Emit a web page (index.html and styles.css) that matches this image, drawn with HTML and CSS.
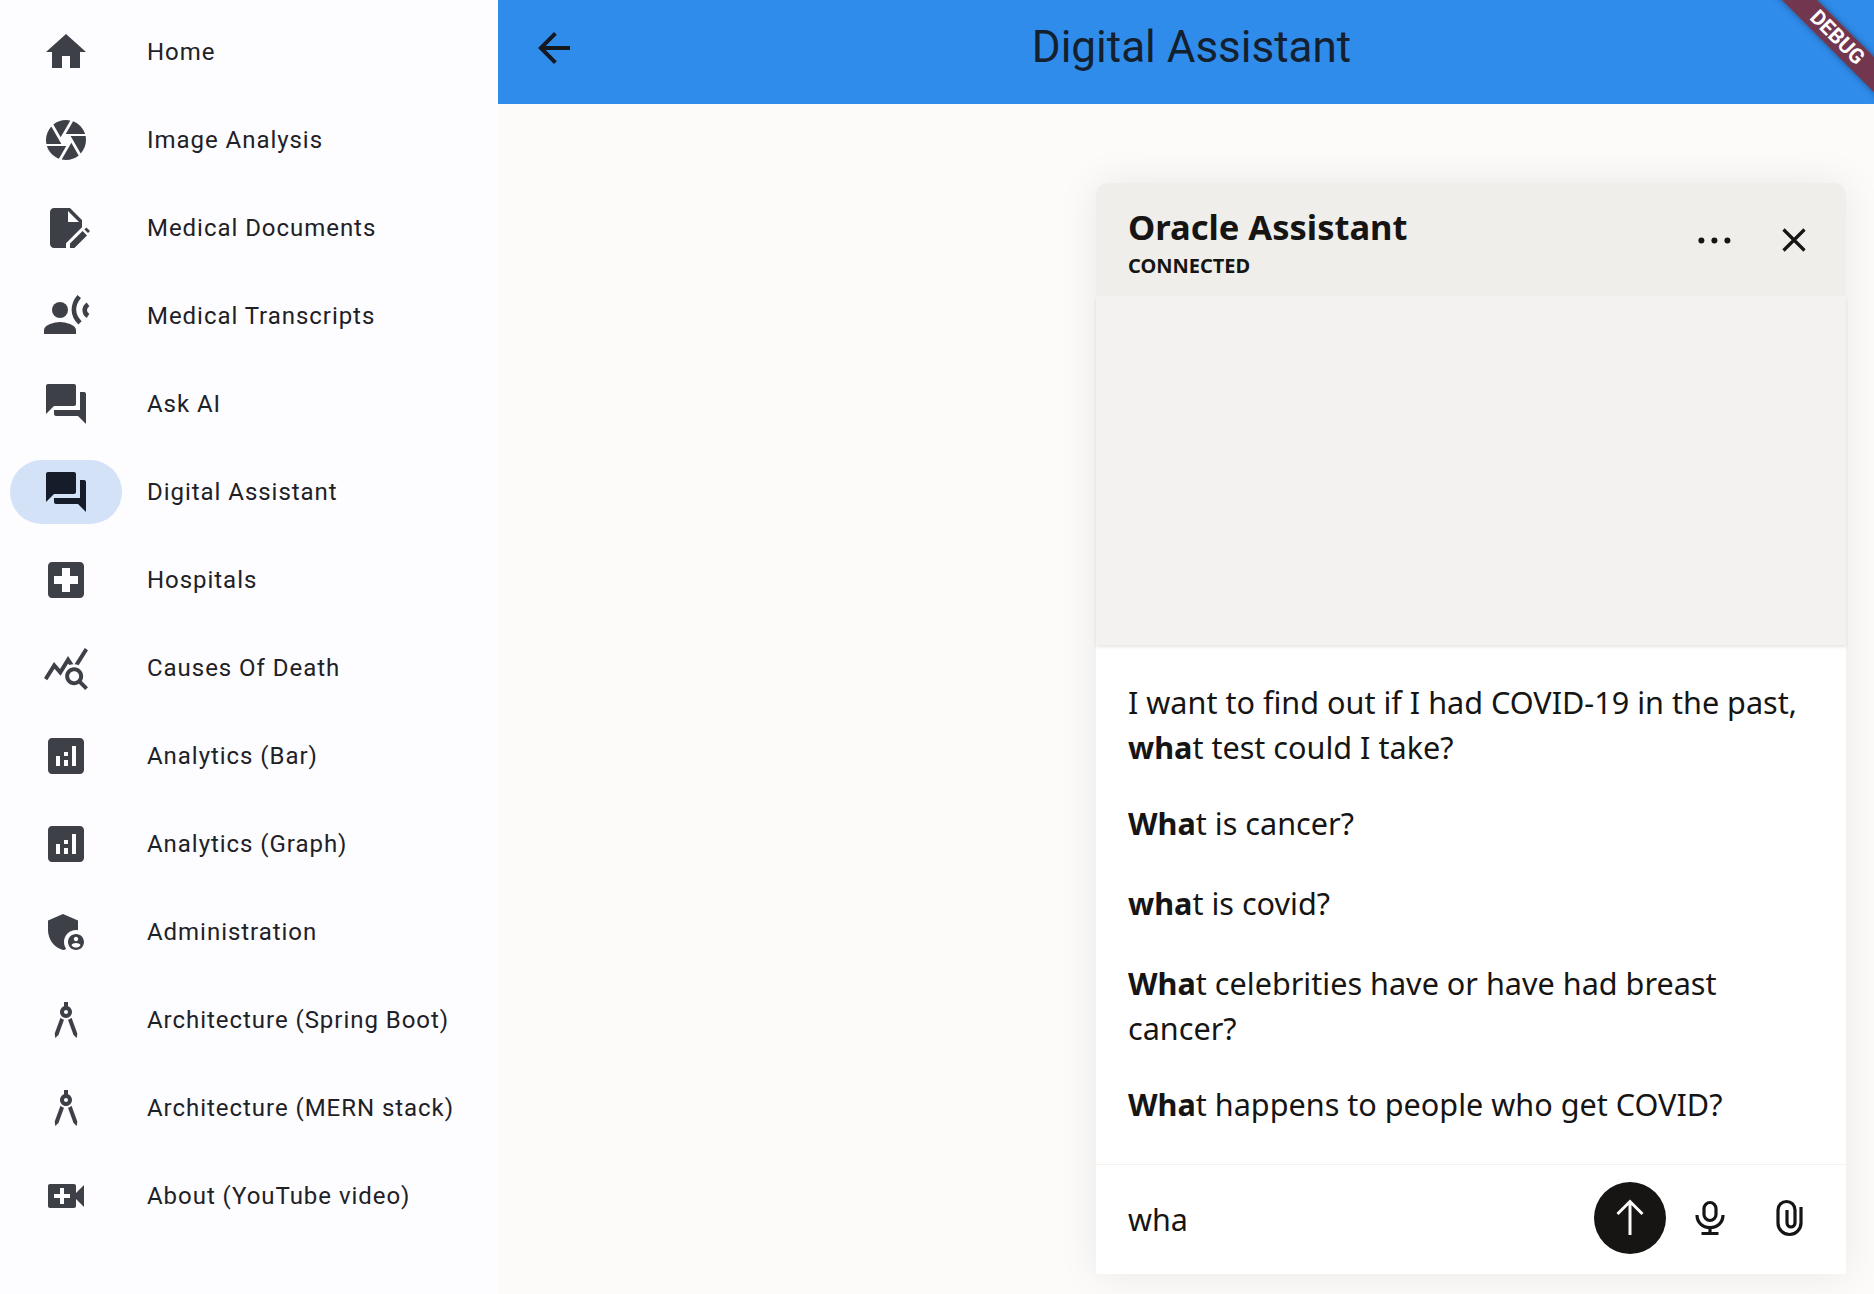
FILE: index.html
```html
<!DOCTYPE html>
<html lang="en">
<head>
<meta charset="utf-8">
<title>Digital Assistant</title>
<link rel="stylesheet" href="styles.css">
</head>
<body>
<div class="app">
  <nav class="rail">
    <a class="item"><span class="pill"><svg class="ico" viewBox="0 0 24 24"><path d="M10 20v-6h4v6h5v-8h3L12 3 2 12h3v8z"/></svg></span><span class="label">Home</span></a>
    <a class="item"><span class="pill"><svg class="ico" viewBox="0 0 24 24"><path d="M9.4 10.5l4.77-8.26C13.47 2.09 12.75 2 12 2c-2.4 0-4.6.85-6.32 2.25l3.66 6.35.06-.1zM21.54 9c-.92-2.92-3.15-5.26-6-6.34L11.88 9h9.66zm.26 1h-7.49l.29.5 4.76 8.25C21 16.97 22 14.61 22 12c0-.69-.07-1.35-.2-2zM8.54 12l-3.9-6.75C3.01 7.03 2 9.39 2 12c0 .69.07 1.35.2 2h7.49l-1.15-2zm-6.08 3c.92 2.92 3.15 5.26 6 6.34L12.12 15H2.46zm11.27 0l-3.9 6.76c.7.15 1.42.24 2.17.24 2.4 0 4.6-.85 6.32-2.25l-3.66-6.35-.93 1.6z"/></svg></span><span class="label">Image Analysis</span></a>
    <a class="item"><span class="pill"><svg class="ico" viewBox="0 0 24 24"><path fill-rule="evenodd" d="M6 2h8l6 6v3.6l-8 8V22H6c-1.1 0-2-.9-2-2V4c0-1.1.9-2 2-2zM13 3.500V9h5.500z"/><path d="M14 22v-2.200l6.300-6.300 2.200 2.200-6.300 6.300zM21.200 12.700l1-1 1.800 1.800-1 1z"/></svg></span><span class="label">Medical Documents</span></a>
    <a class="item"><span class="pill"><svg class="ico" viewBox="0 0 24 24"><circle cx="9" cy="9" r="4"/><path d="M9 15c-2.670 0-8 1.340-8 4v2h16v-2c0-2.660-5.330-4-8-4z"/><path class="arc" d="M18.600 2.200C15 6.500 15 11.500 19 15.400"/><path class="arc" d="M23 6.200C20.800 7.800 20.800 10.500 23 12"/></svg></span><span class="label">Medical Transcripts</span></a>
    <a class="item"><span class="pill"><svg class="ico" viewBox="0 0 24 24"><path d="M21 6h-2v9H6v2c0 .55.45 1 1 1h11l4 4V7c0-.55-.45-1-1-1zm-4 6V3c0-.55-.45-1-1-1H3c-.55 0-1 .45-1 1v14l4-4h10c.55 0 1-.45 1-1z"/></svg></span><span class="label">Ask AI</span></a>
    <a class="item active"><span class="pill"><svg class="ico" viewBox="0 0 24 24"><path d="M21 6h-2v9H6v2c0 .55.45 1 1 1h11l4 4V7c0-.55-.45-1-1-1zm-4 6V3c0-.55-.45-1-1-1H3c-.55 0-1 .45-1 1v14l4-4h10c.55 0 1-.45 1-1z"/></svg></span><span class="label">Digital Assistant</span></a>
    <a class="item"><span class="pill"><svg class="ico" viewBox="0 0 24 24"><path d="M19 3H5c-1.1 0-1.99.9-1.99 2L3 19c0 1.1.9 2 2 2h14c1.1 0 2-.9 2-2V5c0-1.1-.9-2-2-2zm-1 11h-4v4h-4v-4H6v-4h4V6h4v4h4v4z"/></svg></span><span class="label">Hospitals</span></a>
    <a class="item"><span class="pill"><svg class="ico" viewBox="0 0 24 24"><path d="M19.88 18.47c.44-.7.7-1.51.7-2.39 0-2.49-2.01-4.5-4.5-4.5s-4.5 2.01-4.5 4.5 2.01 4.5 4.49 4.5c.88 0 1.7-.26 2.39-.7L21.58 23 23 21.58l-3.12-3.11zm-3.8.11c-1.38 0-2.5-1.12-2.5-2.5s1.12-2.5 2.5-2.5 2.5 1.12 2.5 2.5-1.12 2.5-2.5 2.5zm-.36-8.5c-.74.02-1.45.18-2.1.45l-.55-.83-3.8 6.18-3.01-3.52-3.63 5.81L1 17l5-8 3 3.5L13 6l2.72 4.08zm2.59.5c-.64-.28-1.33-.45-2.05-.49L21.38 2 23 3.18l-4.69 7.4z"/></svg></span><span class="label">Causes Of Death</span></a>
    <a class="item"><span class="pill"><svg class="ico" viewBox="0 0 24 24"><path d="M19 3H5c-1.1 0-2 .9-2 2v14c0 1.1.9 2 2 2h14c1.1 0 2-.9 2-2V5c0-1.1-.9-2-2-2zM9 17H7v-5h2v5zm4 0h-2v-3h2v3zm0-5h-2v-2h2v2zm4 5h-2V7h2v10z"/></svg></span><span class="label">Analytics (Bar)</span></a>
    <a class="item"><span class="pill"><svg class="ico" viewBox="0 0 24 24"><path d="M19 3H5c-1.1 0-2 .9-2 2v14c0 1.1.9 2 2 2h14c1.1 0 2-.9 2-2V5c0-1.1-.9-2-2-2zM9 17H7v-5h2v5zm4 0h-2v-3h2v3zm0-5h-2v-2h2v2zm4 5h-2V7h2v10z"/></svg></span><span class="label">Analytics (Graph)</span></a>
    <a class="item"><span class="pill"><svg class="ico" viewBox="0 0 24 24"><path d="M17 11c.34 0 .67.04 1 .09V6.27L10.5 3 3 6.27v4.91c0 4.54 3.2 8.79 7.5 9.82.55-.13 1.08-.32 1.6-.55-.69-.98-1.1-2.17-1.1-3.45 0-3.31 2.69-6 6-6z"/><path d="M17 13c-2.21 0-4 1.79-4 4s1.79 4 4 4 4-1.79 4-4-1.79-4-4-4zm0 1.38c.62 0 1.12.51 1.12 1.12s-.51 1.12-1.12 1.12-1.12-.51-1.12-1.12.5-1.12 1.12-1.12zm0 5.37c-.93 0-1.74-.46-2.24-1.17.05-.72 1.51-1.08 2.24-1.08s2.19.36 2.24 1.08c-.5.71-1.31 1.17-2.24 1.17z"/></svg></span><span class="label">Administration</span></a>
    <a class="item"><span class="pill"><svg class="ico" viewBox="0 0 24 24"><path d="M6.36 18.78L6.61 21l1.62-1.54 2.77-7.6c-.68-.17-1.28-.51-1.77-.98l-2.87 7.9z"/><path d="M14.77 10.88c-.49.47-1.1.81-1.77.98l2.77 7.6L17.39 21l.26-2.22-2.88-7.9z"/><path d="M15 8c0-1.3-.84-2.4-2-2.82V3h-2v2.18C9.84 5.6 9 6.7 9 8c0 1.66 1.34 3 3 3s3-1.34 3-3zm-3 1c-.55 0-1-.45-1-1 0-.55.45-1 1-1s1 .45 1 1c0 .55-.45 1-1 1z"/></svg></span><span class="label">Architecture (Spring Boot)</span></a>
    <a class="item"><span class="pill"><svg class="ico" viewBox="0 0 24 24"><path d="M6.36 18.78L6.61 21l1.62-1.54 2.77-7.6c-.68-.17-1.28-.51-1.77-.98l-2.87 7.9z"/><path d="M14.77 10.88c-.49.47-1.1.81-1.77.98l2.77 7.6L17.39 21l.26-2.22-2.88-7.9z"/><path d="M15 8c0-1.3-.84-2.4-2-2.82V3h-2v2.18C9.84 5.6 9 6.7 9 8c0 1.66 1.34 3 3 3s3-1.34 3-3zm-3 1c-.55 0-1-.45-1-1 0-.55.45-1 1-1s1 .45 1 1c0 .55-.45 1-1 1z"/></svg></span><span class="label">Architecture (MERN stack)</span></a>
    <a class="item"><span class="pill"><svg class="ico" viewBox="0 0 24 24"><path d="M17 10.5V7c0-.55-.45-1-1-1H4c-.55 0-1 .45-1 1v10c0 .55.45 1 1 1h12c.55 0 1-.45 1-1v-3.5l4 4v-11l-4 4zM14 13h-3v3H9v-3H6v-2h3V8h2v3h3v2z"/></svg></span><span class="label">About (YouTube video)</span></a>
  </nav>
  <main class="main">
    <header class="bar">
      <svg class="ico back" viewBox="0 0 24 24"><path d="M20 11H7.83l5.59-5.59L12 4l-8 8 8 8 1.41-1.41L7.83 13H20v-2z"/></svg>
      <h1 class="title">Digital Assistant</h1>
    </header>
    <section class="stage">
      <div class="chat">
        <div class="chat-head">
          <div class="chat-id">
            <div class="chat-name">Oracle Assistant</div>
            <div class="chat-status">CONNECTED</div>
          </div>
          <div class="chat-actions">
            <svg class="act" viewBox="0 0 40 40"><circle cx="7.400" cy="20.500" r="3"/><circle cx="20.400" cy="20.500" r="3"/><circle cx="33.400" cy="20.500" r="3"/></svg>
            <svg class="act" viewBox="0 0 40 40"><path class="line" d="M9.500 9.500l21 21M30.500 9.500l-21 21"/></svg>
          </div>
        </div>
        <div class="chat-log"></div>
        <ul class="suggest">
          <li class="wrap">I want to find out if I had COVID-19 in the past, <b>wha</b>t test could I take?</li>
          <li><b>Wha</b>t is cancer?</li>
          <li><b>wha</b>t is covid?</li>
          <li class="wrap"><b>Wha</b>t celebrities have or have had breast cancer?</li>
          <li><b>Wha</b>t happens to people who get COVID?</li>
        </ul>
        <div class="composer">
          <div class="input">wha</div>
          <button class="send"><svg viewBox="0 0 72 72"><path class="line-w" d="M36 53V20M23.500 32L36 19.500 48.500 32"/></svg></button>
          <svg class="tool mic" viewBox="0 0 40 40"><path class="line" d="M20 4.500a6 6 0 0 1 6 6v6a6 6 0 0 1-12 0v-6a6 6 0 0 1 6-6zM7 17c0 7.500 5.500 12.500 13 12.500S33 24.500 33 17M20 29.500v6.500M11.500 35.500h17"/></svg>
          <svg class="tool clip" viewBox="0 0 40 40"><path class="line" d="M31 9v16a11.500 11.500 0 0 1-23 0V12a8.500 8.500 0 0 1 17 0v13a4 4 0 0 1-8 0V12"/></svg>
        </div>
      </div>
    </section>
  </main>
  <div class="ribbon">DEBUG</div>
</div>
</body>
</html>
```
FILE: styles.css
```css
* { box-sizing: border-box; }
html, body { margin: 0; height: 100%; }
body { font-family: Roboto, "Liberation Sans", sans-serif; background: #fcfbf9; overflow: hidden; }
.app { display: flex; width: 1874px; height: 1294px; position: relative; overflow: hidden; }

.rail { width: 498px; flex: none; background: #fdfcff; padding-top: 8px; display: flex; flex-direction: column; }
.item { height: 88px; display: flex; align-items: center; padding-left: 10px; gap: 25px; flex: none; }
.pill { width: 112px; height: 64px; border-radius: 32px; display: flex; align-items: center; justify-content: center; flex: none; }
.ico { width: 48px; height: 48px; fill: #3e4048; flex: none; }
.arc { fill: none; stroke: #3e4048; stroke-width: 2.3; }
.label { font-size: 24px; letter-spacing: .96px; color: #1e2126; white-space: nowrap; }
.active .pill { background: #d3e2f7; }
.active .ico { fill: #161c2a; }

.main { flex: 1; display: flex; flex-direction: column; min-width: 0; }
.bar { height: 104px; flex: none; background: #2f8ceb; display: flex; align-items: center; padding-left: 32px; padding-right: 69px; }
.back { fill: #14181f; margin-bottom: 8px; }
.title { flex: 1; margin: 0 0 10px; text-align: center; font-weight: 400; font-size: 44px; color: #14202e; }

.stage { flex: 1; display: flex; justify-content: flex-end; padding: 79px 28px 20px 0; }
.chat { width: 750px; height: 1091px; border-radius: 12px 12px 0 0; display: flex; flex-direction: column; background: #fff; box-shadow: 0 0 40px rgba(22, 21, 19, .08); color: #161513; font-family: "Noto Sans", "Open Sans", sans-serif; }
.chat-head { height: 113px; flex: none; background: #efeeea; border-radius: 12px 12px 0 0; display: flex; justify-content: space-between; padding: 20px 27px 0 32px; }
.chat-name { font-size: 34.500px; font-weight: 700; line-height: 48px; }
.chat-status { font-size: 20px; font-weight: 700; line-height: 30px; }
.chat-actions { display: flex; gap: 40px; padding-top: 17px; height: 76px; margin-right: 5px; }
.act { width: 40px; height: 40px; fill: #161513; }
.line { fill: none; stroke: #161513; stroke-width: 3.2; }
.chat-log { height: 349px; flex: none; background: #f3f2f0; box-shadow: 0 2px 3px rgba(0, 0, 0, .1); position: relative; }
.suggest { flex: none; height: 519px; margin: 0; padding: 35px 32px 0; list-style: none; font-size: 30.600px; line-height: 45px; }
.suggest li { padding-bottom: 35px; }
.suggest li.wrap { padding-bottom: 31px; }
.suggest b { font-weight: 700; }
.composer { height: 109px; flex: none; border-top: 1px solid #f3f2f0; display: flex; align-items: center; padding: 0 36px 0 32px; }
.input { flex: 1; font-size: 30.500px; }
.send { width: 72px; height: 72px; border-radius: 50%; border: 0; padding: 0; background: #161513; margin-right: 24px; margin-bottom: 2px; flex: none; }
.send svg { display: block; }
.line-w { fill: none; stroke: #fcfbf9; stroke-width: 3; }
.tool { width: 40px; height: 40px; flex: none; margin-bottom: 2px; }
.mic { margin-right: 40px; }

.ribbon { position: absolute; top: 25px; right: -48px; width: 170px; height: 25px; transform: rotate(45deg); background: rgba(122, 45, 62, .9); box-shadow: 0 0 6px rgba(0, 0, 0, .4); color: #fff; font: 700 21px/25px Roboto, sans-serif; text-align: center; }
```
